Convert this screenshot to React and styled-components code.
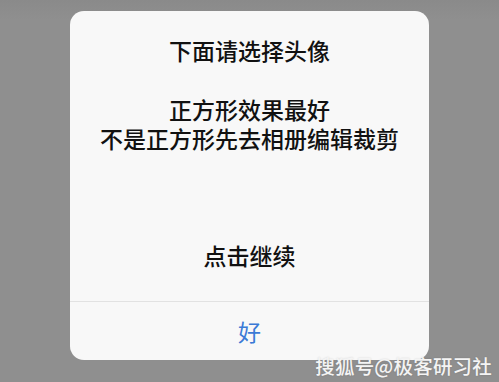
import React from 'react';
import styled, { createGlobalStyle } from 'styled-components';

const GlobalStyle = createGlobalStyle`
  html, body {
    margin: 0;
    padding: 0;
    background: #8f8f8f;
  }
  body {
    font-family: "Noto Sans CJK SC", "Noto Sans", sans-serif;
  }
`;

const Screen = styled.div`
  position: relative;
  width: 499px;
  height: 382px;
  overflow: hidden;
  box-sizing: border-box;
  padding: 11px 0 0 70px;
  background: linear-gradient(180deg, #8a8a8a 0px, #8f8f8f 20px, #8f8f8f 100%);
`;

const Dialog = styled.div`
  width: 359px;
  height: 349px;
  background: #f8f8f8;
  border-radius: 14px;
  display: flex;
  flex-direction: column;
  overflow: hidden;
`;

const Body = styled.div`
  flex: 1;
  display: flex;
  flex-direction: column;
  align-items: center;
  padding-top: 25px;
  color: #111;
  font-size: 23px;
  line-height: 29px;
  font-weight: 500;
  text-align: center;
`;

const Line = styled.div`
  margin-top: ${(p) => p.$gap || 0}px;
`;

const Divider = styled.div`
  height: 1px;
  background: #e2e2e2;
`;

const Button = styled.div`
  height: 58px;
  display: flex;
  align-items: center;
  justify-content: center;
  color: #3b7ad6;
  font-size: 23px;
`;

const Watermark = styled.div`
  position: absolute;
  right: 7px;
  bottom: 3px;
  color: #f4f4f4;
  font-size: 19.5px;
  line-height: 26px;
  font-weight: 500;
  letter-spacing: 0.2px;
  text-shadow: 0 0 2px rgba(0, 0, 0, 0.15);
`;

export default function App() {
  return (
    <>
      <GlobalStyle />
      <Screen>
        <Dialog>
          <Body>
            <Line>下面请选择头像</Line>
            <Line $gap={30}>正方形效果最好</Line>
            <Line>不是正方形先去相册编辑裁剪</Line>
            <Line $gap={88}>点击继续</Line>
          </Body>
          <Divider />
          <Button>好</Button>
        </Dialog>
        <Watermark>搜狐号@极客研习社</Watermark>
      </Screen>
    </>
  );
}
